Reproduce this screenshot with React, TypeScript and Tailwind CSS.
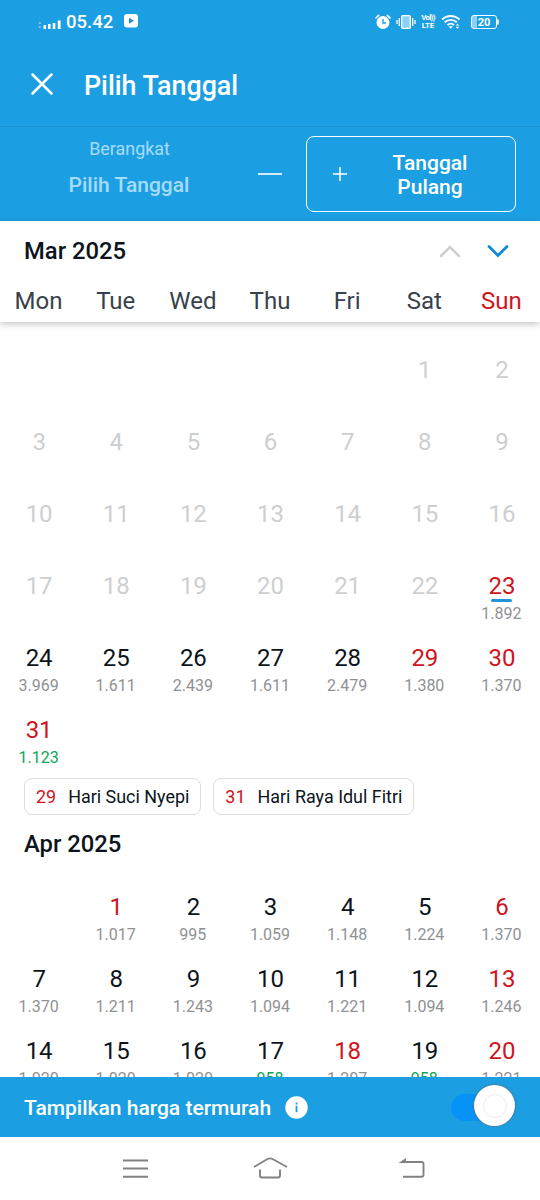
import { useState } from 'react';

type Day = { day: number; price?: string; holiday?: boolean; cheap?: boolean; today?: boolean; past?: boolean };
type Cell = Day | null;

const WEEKDAYS = ['Mon', 'Tue', 'Wed', 'Thu', 'Fri', 'Sat', 'Sun'];

const past = (from: number, to: number): Day[] =>
  Array.from({ length: to - from + 1 }, (_, i) => ({ day: from + i, past: true }));

const MARCH: Cell[] = [
  null, null, null, null, null,
  ...past(1, 22),
  { day: 23, price: '1.892', holiday: true, today: true },
  { day: 24, price: '3.969' },
  { day: 25, price: '1.611' },
  { day: 26, price: '2.439' },
  { day: 27, price: '1.611' },
  { day: 28, price: '2.479' },
  { day: 29, price: '1.380', holiday: true },
  { day: 30, price: '1.370', holiday: true },
  { day: 31, price: '1.123', holiday: true, cheap: true },
];

const APRIL: Cell[] = [
  null,
  { day: 1, price: '1.017', holiday: true },
  { day: 2, price: '995' },
  { day: 3, price: '1.059' },
  { day: 4, price: '1.148' },
  { day: 5, price: '1.224' },
  { day: 6, price: '1.370', holiday: true },
  { day: 7, price: '1.370' },
  { day: 8, price: '1.211' },
  { day: 9, price: '1.243' },
  { day: 10, price: '1.094' },
  { day: 11, price: '1.221' },
  { day: 12, price: '1.094' },
  { day: 13, price: '1.246', holiday: true },
  { day: 14, price: '1.020' },
  { day: 15, price: '1.020' },
  { day: 16, price: '1.020' },
  { day: 17, price: '958', cheap: true },
  { day: 18, price: '1.207', holiday: true },
  { day: 19, price: '958', cheap: true },
  { day: 20, price: '1.221', holiday: true },
];

export default function App() {
  const [cheapest, setCheapest] = useState(true);

  return (
    <div className="flex h-[1200px] w-[540px] flex-col overflow-hidden bg-white font-['Roboto',sans-serif] text-[#0c141c]">
      <div className="shrink-0 bg-[#1c9fe2] text-white">
        <StatusBar />
        <div className="flex h-[82px] items-center border-b border-[#1990cf] pl-[30px]">
          <button aria-label="Tutup" className="-mt-[3px]">
            <svg width="24" height="24" viewBox="0 0 24 24" fill="none" stroke="currentColor" strokeWidth="2.5" strokeLinecap="round">
              <path d="M2.5 2.500l19 19M21.5 2.500l-19 19" />
            </svg>
          </button>
          <h1 className="ml-[30px] pt-0.5 text-[26.800px] font-medium">Pilih Tanggal</h1>
        </div>
        <TripBar />
      </div>

      <div className="relative z-10 h-[101px] shrink-0 bg-white shadow-[0_2px_7px_rgba(0,0,0,0.24)]">
        <div className="flex h-[59px] items-center justify-between pl-6 pr-[31px]">
          <h2 className="pt-0.5 text-[23.800px] font-medium">Mar 2025</h2>
          <div className="flex gap-[26px]">
            <svg width="22" height="14" viewBox="0 0 22 14" fill="none" stroke="#cdcfd1" strokeWidth="2.6" strokeLinecap="round">
              <path d="M2 12l9-9 9 9" />
            </svg>
            <svg width="22" height="14" viewBox="0 0 22 14" fill="none" stroke="#1289d8" strokeWidth="2.8" strokeLinecap="round">
              <path d="M2 2.500l9 9 9-9" />
            </svg>
          </div>
        </div>
        <div className="grid grid-cols-7 text-center text-2xl leading-[42px] text-[#37424c]">
          {WEEKDAYS.map((w) => (
            <span key={w} className={w === 'Sun' ? 'text-[#d0141c]' : ''}>{w}</span>
          ))}
        </div>
      </div>

      <div className="min-h-0 flex-1 overflow-hidden pt-6">
        <MonthGrid cells={MARCH} />
        <div className="flex gap-3 px-6">
          <HolidayChip day="29" name="Hari Suci Nyepi" />
          <HolidayChip day="31" name="Hari Raya Idul Fitri" />
        </div>
        <h2 className="h-[68px] pl-6 text-[23.800px] font-medium leading-[58px]">Apr 2025</h2>
        <MonthGrid cells={APRIL} />
      </div>

      <div className="flex h-[60px] shrink-0 items-center bg-[#1c9fe2] pl-6 pr-6 text-white">
        <span className="pt-[3px] text-[21px] font-medium">Tampilkan harga termurah</span>
        <svg className="ml-[14px]" width="23" height="23" viewBox="0 0 23 23">
          <circle cx="11.5" cy="11.5" r="11.200" fill="#fff" />
          <path d="M11.500 9.800v6.400M11.500 6.500v1.900" stroke="#1c9fe2" strokeWidth="1.800" />
        </svg>
        <Toggle on={cheapest} onChange={() => setCheapest(!cheapest)} />
      </div>

      <NavBar />
    </div>
  );
}

function StatusBar() {
  return (
    <div className="flex h-[45px] items-center justify-between pl-[38px] pr-[41px]">
      <div className="flex items-center">
        <svg width="24" height="12" viewBox="0 0 24 12" fill="#fff">
          <path d="M5.500 8h2.600v4H5.500zM10 7h2.600v5H10zM14.700 6h2.600v6h-2.600zM19.800 3.500h2.800V12h-2.800z" />
          <path d="M.8 5h2v2h-2zM.8 9h2v2h-2z" opacity=".4" />
        </svg>
        <span className="ml-1 text-[18.500px] font-medium">05.42</span>
        <svg className="-mt-[3px] ml-[11px]" width="14" height="14" viewBox="0 0 14 14">
          <rect width="14" height="13.500" rx="3" fill="#fff" />
          <path d="M5 3.800l5 3-5 3z" fill="#1c8fd0" />
        </svg>
      </div>
      <div className="flex items-center pb-0.5">
        <svg width="16" height="16" viewBox="0 0 16 16" fill="none" stroke="#fff">
          <circle cx="8" cy="8.500" r="6.500" fill="#fff" stroke="none" />
          <path d="M1 4l2.600-2.600M15 4l-2.600-2.600" strokeWidth="1.700" strokeLinecap="round" />
          <path d="M8 5v4h3" stroke="#1c9fe2" strokeWidth="1.400" />
        </svg>
        <svg className="ml-[5px]" width="20" height="16" viewBox="0 0 20 16" fill="none" stroke="#fff">
          <rect x="5.700" y="1.700" width="8.600" height="12.600" rx="1" fill="#8bd0f4" strokeWidth="1.300" />
          <path d="M3.300 4v8M16.700 4v8M1 6v4M19 6v4" strokeWidth="1.300" />
        </svg>
        <div className="ml-[5px] flex w-[14px] flex-col items-center whitespace-nowrap text-[8px] font-bold leading-[8px]">
          <span className="-tracking-[0.8px]">Vol))</span>
          <span className="-tracking-[0.2px]">LTE</span>
        </div>
        <svg className="ml-1.5" width="20" height="16" viewBox="0 0 20 16" fill="none" stroke="#fff">
          <path d="M1 5.500c5-4.700 12.500-4.700 17.500 0M3.700 8.300c3.500-3.200 8.700-3.200 12 0M6.500 11c2-1.700 4.500-1.700 6.500 0" strokeWidth="1.900" />
          <path d="M7.500 12.300h4.500L9.700 14.700z" fill="#fff" stroke="none" />
          <path d="M14.700 11.500l1.800-2 1.800 2zM14.700 12.800l1.800 2 1.800-2z" fill="#fff" stroke="none" />
        </svg>
        <div className="ml-[10px] flex items-center">
          <div className="flex h-[14px] w-[26px] items-center justify-center rounded-[3px] border border-white bg-linear-to-r from-[#8bd0f4] from-20% to-transparent to-20% pt-px text-[11px] font-bold leading-none">
            20
          </div>
          <div className="h-[6px] w-[2px] rounded-r-sm bg-white/80" />
        </div>
      </div>
    </div>
  );
}

function TripBar() {
  return (
    <div className="flex h-[94px] items-start">
      <div className="w-[258px] pt-[10px] text-center text-[#a5dcfa]">
        <div className="pl-px text-[17.900px] leading-6">Berangkat</div>
        <div className="mt-[12px] text-[21px] font-medium leading-6">Pilih Tanggal</div>
      </div>
      <div className="mt-[46px] h-[2px] w-6 bg-white/80" />
      <button className="ml-6 mt-[9px] flex h-[76px] w-[210px] items-center rounded-lg border-[1.500px] border-white pl-[26px]">
        <svg width="14" height="14" viewBox="0 0 14 14" stroke="#fff" strokeWidth="1.500">
          <path d="M0 7h14M7 0v14" />
        </svg>
        <span className="ml-[33px] mt-px w-[100px] text-[21px] font-medium leading-6">Tanggal Pulang</span>
      </button>
    </div>
  );
}

function MonthGrid({ cells }: { cells: Cell[] }) {
  return (
    <div className="grid auto-rows-[72px] grid-cols-7">
      {cells.map((c, i) => (c ? <DayCell key={i} {...c} /> : <div key={i} />))}
    </div>
  );
}

function DayCell({ day, price, holiday, cheap, today, past }: Day) {
  const color = past ? 'text-[#cdcfd1]' : holiday ? 'text-[#d0141c]' : '';
  return (
    <div className="relative flex flex-col items-center pt-[9px]">
      <span className={`pl-px text-2xl leading-[30px] -tracking-[0.1px] ${color}`}>{day}</span>
      {today ? <span className="absolute top-[37px] h-[3px] w-[21px] rounded-full bg-[#2492d6]" /> : null}
      {price ? <span className={`mt-[3px] text-base leading-5 ${cheap ? 'text-[#0da558]' : 'text-[#8f9193]'}`}>{price}</span> : null}
    </div>
  );
}

function HolidayChip({ day, name }: { day: string; name: string }) {
  return (
    <div className="flex h-[37px] items-center gap-3 rounded-lg border border-[#dcdedf] px-[11px] pt-px text-[17.930px]">
      <span className="text-[#d0141c]">{day}</span>
      <span>{name}</span>
    </div>
  );
}

function Toggle({ on, onChange }: { on: boolean; onChange: () => void }) {
  return (
    <button role="switch" aria-checked={on} onClick={onChange} className="relative -mt-[3px] ml-auto flex h-[42px] w-[65px] items-center">
      <span className="mt-[3px] h-[27px] w-full rounded-full bg-[#0793f6]" />
      <span className={`absolute flex size-[41px] items-center justify-center rounded-full bg-white shadow-[0_0_2px_1px_rgba(90,110,130,0.55)] ${on ? 'right-px' : 'left-0'}`}>
        <span className="size-6 rounded-full border border-[#ebebf2]" />
      </span>
    </button>
  );
}

function NavBar() {
  return (
    <div className="flex h-[63px] shrink-0 items-center justify-between bg-white pl-[114px] pr-[110px]">
      <svg width="42" height="28" viewBox="0 0 42 28" fill="none" stroke="#828282" strokeWidth="1.900">
        <path d="M9 5.500h25M9 13.500h25M9 21.700h25" />
      </svg>
      <svg className="-ml-1" width="42" height="28" viewBox="0 0 42 28" fill="none" stroke="#828282" strokeWidth="1.900">
        <path d="M5 12L18.500 4q2.500-1.300 5 0L38 12M11 14.500v6q0 2 2 2h16q2 0 2-2v-6" />
      </svg>
      <svg width="42" height="28" viewBox="0 0 42 28" fill="none" stroke="#828282" strokeWidth="1.900">
        <path d="M16 7h17.500q2 0 2 2v10.700q0 2-2 2H15" />
        <path d="M10.500 7.900l7.500-5v5z" fill="#828282" stroke="none" />
      </svg>
    </div>
  );
}
